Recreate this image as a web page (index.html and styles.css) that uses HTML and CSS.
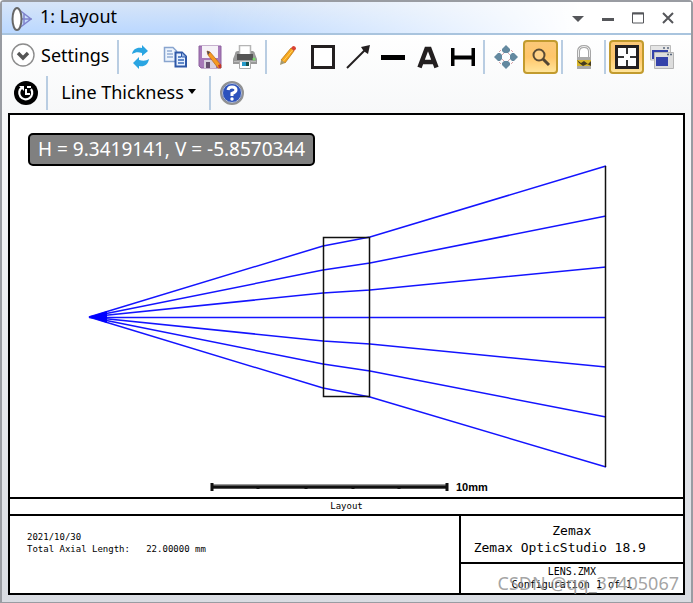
FILE: index.html
```html
<!DOCTYPE html>
<html lang="en">
<head>
<meta charset="utf-8">
<title>1: Layout</title>
<link rel="stylesheet" href="styles.css">
</head>
<body>
<main class="window">
  <header class="titlebar">
    <svg class="app-icon" width="24" height="26" viewBox="0 0 24 26" aria-hidden="true">
      <path d="M8 4L21 14L8 24M6 14H22M14 8V20" fill="none" stroke="#7f82cc" stroke-width="1.500"/>
      <ellipse cx="7" cy="14" rx="4.500" ry="11" fill="#fff" stroke="#666" stroke-width="2"/>
    </svg>
    <h1 class="title">1: Layout</h1>
    <button class="win-btn" aria-label="Menu"><svg width="14" height="14" viewBox="0 0 14 14"><path d="M1 5H13L7 11Z" fill="#55565a"/></svg></button>
    <button class="win-btn" aria-label="Minimize"><svg width="14" height="14" viewBox="0 0 14 14"><path d="M1 8.500H13" stroke="#55565a" stroke-width="3"/></svg></button>
    <button class="win-btn" aria-label="Maximize"><svg width="14" height="14" viewBox="0 0 14 14"><path d="M1.500 2H12.500V12H1.500Z" fill="none" stroke="#55565a"/><path d="M1 2.500H13" stroke="#55565a" stroke-width="2"/></svg></button>
    <button class="win-btn" aria-label="Close"><svg width="14" height="14" viewBox="0 0 14 14"><path d="M2 2L12 12M12 2L2 12" stroke="#55565a" stroke-width="2"/></svg></button>
  </header>

  <div class="toolbar" role="toolbar" aria-label="Layout tools">
    <div class="row">
      <button class="settings">
        <svg width="24" height="24" viewBox="0 0 24 24" aria-hidden="true"><circle cx="12" cy="12" r="11" fill="#fff" stroke="#8c8c8c" stroke-width="1.400"/><path d="M7 10L12 15L17 10" fill="none" stroke="#555" stroke-width="3.400"/></svg>
        Settings
      </button>
      <span class="sep"></span>
      <button class="tool" aria-label="Refresh"><svg width="24" height="24" viewBox="0 0 24 24"><path d="M4 9C5 4 9 2 14 3V0L20 6L14 11V8C10 7 8 7 4 9Z" fill="#2aa5e2"/><path d="M21 14C20 20 16 22 11 21V24L5 18L11 12V15C15 16 18 16 21 14Z" fill="#2aa5e2"/></svg></button>
      <button class="tool" aria-label="Copy"><svg width="24" height="24" viewBox="0 0 24 24"><path d="M1.500 2.500H10L13.500 6V16.500H1.500Z" fill="#edf4fd" stroke="#89a5cf" stroke-width="1.500"/><path d="M4 6H9M4 9H10M4 12H10" stroke="#6689bf"/><path d="M12.500 7.500H19L23 11.500V21.500H12.500Z" fill="#e6f0ff" stroke="#2e58a8" stroke-width="2"/><path d="M18.500 7.500V12H23" fill="#9dbbe8" stroke="#2e58a8"/><path d="M15 12H18M15 15H21M15 18H21" stroke="#3768b8" stroke-width="1.500"/></svg></button>
      <button class="tool" aria-label="Save"><svg width="24" height="24" viewBox="0 0 24 24"><path d="M1 1H23V23H3L1 21Z" fill="#a779b9" stroke="#8e629f"/><path d="M4 1H20V13H4Z" fill="#f5f2f7"/><path d="M6 15H18V23H6Z" fill="#d9d1df"/><path d="M8 17H12V23H8Z" fill="#665070"/><path d="M9 6L12 7L23 20V23H20L10 10Z" fill="#f59a22" stroke="#b3671c" stroke-width=".7"/><path d="M9 6L12 7L10 10Z" fill="#4b4652"/><path d="M20 20L23 19V23H21Z" fill="#c7322c"/></svg></button>
      <button class="tool" aria-label="Print"><svg width="24" height="24" viewBox="0 0 24 24"><path d="M6.500 9V.500H17.500V9" fill="#fff" stroke="#b5b5b5" stroke-width="1.500"/><path d="M2 9Q2 6 5 6H6V9H18V6H20Q22 7 22 9L24 14V19H0V14Z" fill="#999"/><path d="M4 9H20V15H4Z" fill="#555"/><path d="M1 16.500H23" stroke="#bbb"/><circle cx="21" cy="14" r="1.500" fill="#78db6b"/><path d="M6.500 16H17.500V23.500H6.500Z" fill="#fff" stroke="#aaa"/><path d="M9 17H13V21H9Z" fill="#269ac9"/><path d="M13 17H16V21H13Z" fill="#19524e"/></svg></button>
      <span class="sep"></span>
      <button class="tool" aria-label="Draw"><svg width="24" height="24" viewBox="0 0 24 24"><path d="M15 3L18 6L9 18L5 15Z" fill="#f7a71c" stroke="#b9781b" stroke-width=".8"/><path d="M17 4.500L7 16.500" stroke="#ffcf62"/><path d="M15 3L17 1Q20 1 20 4L18 6Z" fill="#d94334"/><path d="M5 15L4 20L9 18Z" fill="#a49a72"/></svg></button>
      <button class="tool" aria-label="Rectangle"><svg width="24" height="24" viewBox="0 0 24 24"><path d="M1.500 1.500H22.500V22.500H1.500Z" fill="#fff" stroke="#231f20" stroke-width="3"/></svg></button>
      <button class="tool" aria-label="Arrow"><svg width="24" height="24" viewBox="0 0 24 24"><path d="M1 23L19 5" stroke="#231f20" stroke-width="2"/><path d="M24 0L22 9L19 7L17 5L15 2Z" fill="#231f20"/></svg></button>
      <button class="tool" aria-label="Line"><svg width="24" height="24" viewBox="0 0 24 24"><path d="M0 12.500H24" stroke="#000" stroke-width="5"/></svg></button>
      <button class="tool" aria-label="Text"><svg width="24" height="24" viewBox="0 0 24 24"><path d="M3.500 22.500L10.500 4H13.500L20.500 22.500M7 17H17" fill="none" stroke="#231f20" stroke-width="4.500"/></svg></button>
      <button class="tool" aria-label="Dimension"><svg width="24" height="24" viewBox="0 0 24 24"><path d="M1.500 3V21M22.500 3V21M1 12.500H23" stroke="#000" stroke-width="4"/></svg></button>
      <span class="sep"></span>
      <button class="tool" aria-label="Pan"><svg width="24" height="24" viewBox="0 0 24 24"><g fill="#6489a0"><path id="arm" d="M12 0L16 4V6L14 8H10L8 6V4Z"/><use href="#arm" transform="rotate(90 12 12)"/><use href="#arm" transform="rotate(180 12 12)"/><use href="#arm" transform="rotate(270 12 12)"/></g><path d="M5 7L7 5M17 5L19 7M5 17L7 19M19 17L17 19M8 10L10 8M14 8L16 10M8 14L10 16M14 16L16 14" stroke="#d8a5aa"/></svg></button>
      <button class="tool active" aria-label="Zoom" aria-pressed="true"><svg width="24" height="24" viewBox="0 0 24 24"><circle cx="10" cy="10" r="5.500" fill="#ffd289" stroke="#5a4b35" stroke-width="2"/><path d="M14 14L20 20" stroke="#514533" stroke-width="3"/></svg></button>
      <span class="sep"></span>
      <button class="tool" aria-label="Lock"><svg width="24" height="24" viewBox="0 0 24 24"><path d="M6.500 13V6Q7 1.500 12 1.500T17.500 6V13" fill="#fff" stroke="#a6a6a6" stroke-width="3"/><path d="M6.500 13V6Q7 1.500 12 1.500T17.500 6V13" fill="none" stroke="#eee"/><path d="M5 12H19V24H5Z" fill="#aaa"/><path d="M5 15H19V21H5Z" fill="#d9b72b"/><path d="M5 15L9 18L12 16L16 19L19 16V21L15 19L11 21L7 18Z" fill="#453c20"/></svg></button>
      <span class="sep"></span>
      <button class="tool active" aria-label="Fit window" aria-pressed="true"><svg width="24" height="24" viewBox="0 0 24 24"><path d="M1.500 1.500H22.500V22.500H1.500Z" fill="#fff" stroke="#231f20" stroke-width="3"/><path d="M12 3V9M12 15V21M3 12H9M15 12H21" stroke="#333" stroke-width="2"/></svg></button>
      <button class="tool" aria-label="Windows"><svg width="24" height="24" viewBox="0 0 24 24"><path d="M.500 .500H20.500V15H.500Z" fill="#e5e5e5" stroke="#bbb"/><path d="M2 5H18V14H2Z" fill="#3442aa"/><path d="M4.500 7.500H23.500V23.500H4.500Z" fill="#ddd" stroke="#b5b5b5"/><path d="M6 12H18V21H6Z" fill="#3442aa"/><path d="M13 3H15M17 3H19M17 9.500H19M20 9.500H22" stroke="#58677d" stroke-width="1.500"/></svg></button>
    </div>
    <div class="row">
      <button class="tool" aria-label="Reset"><svg width="24" height="24" viewBox="0 0 24 24"><circle cx="12" cy="12" r="12" fill="#000"/><path d="M8 6.500A6.500 6.500 0 1 0 17 8" fill="none" stroke="#fff" stroke-width="2.200"/><path d="M5 5H10V10Z" fill="#fff"/><path d="M12 8V13H16" fill="none" stroke="#fff" stroke-width="2"/><path d="M13 6H17" stroke="#fff" stroke-width="2"/></svg></button>
      <span class="sep"></span>
      <button class="thickness">Line Thickness <svg width="8" height="5" viewBox="0 0 8 5" aria-hidden="true"><path d="M0 0H8L4 5Z"/></svg></button>
      <span class="sep"></span>
      <button class="tool" aria-label="Help"><svg width="24" height="24" viewBox="0 0 24 24"><circle cx="12" cy="12" r="11" fill="#2c52bd" stroke="#929292" stroke-width="2"/><circle cx="12" cy="12" r="9.500" fill="none" stroke="#b9c0d0"/><path d="M8 9Q8.500 6 12 6Q16 6 16 9Q16 11 12 12.500V15" fill="none" stroke="#fff" stroke-width="3"/><circle cx="12" cy="18" r="1.700" fill="#fff"/></svg></button>
    </div>
  </div>

  <section class="sheet">
    <div class="plot">
      <svg class="drawing" viewBox="10 115 673 382" role="img" aria-label="Ray layout">
        <g class="rays">
          <path d="M89 317L323 246L370 237L606 166"/>
          <path d="M89 317L323 270L370 263L606 216"/>
          <path d="M89 317L323 293L370 290L606 267"/>
          <path d="M89 317.500H606"/>
          <path d="M89 317L323 341L370 344L606 367"/>
          <path d="M89 317L323 364L370 371L606 417"/>
          <path d="M89 317L323 388L370 397L606 467"/>
          <path class="source" d="M89 317L107 311V323Z"/>
        </g>
        <path class="lens" d="M323.500 237.500H369.500V396.500H323.500ZM605.500 166V467"/>
        <path class="scale-halo" d="M212 486.500H447"/>
        <path class="scale" d="M212 487H447"/>
        <path class="ticks" d="M212 483V491M447 483V491M258 486V489M306 486V489M353 486V489M399 486V489"/>
        <text class="scale-label" x="456" y="491">10mm</text>
      </svg>
      <output class="readout">H = 9.3419141, V = -5.8570344</output>
    </div>
    <h2 class="caption">Layout</h2>
    <div class="details">
      <div class="notes">2021/10/30
Total Axial Length:   22.00000 mm</div>
      <div class="side">
        <div class="product"><span>Zemax</span><span class="version">Zemax OpticStudio 18.9</span></div>
        <div class="file">LENS.ZMX<br>Configuration 1 of 1</div>
      </div>
    </div>
  </section>
  <div class="watermark">CSDN @qq_37405067</div>
</main>
</body>
</html>
```
FILE: styles.css
```css
* { box-sizing: border-box; }

body {
  margin: 0;
  font-family: "Noto Sans", sans-serif;
  font-size: 18px;
  color: #000;
}

.window {
  position: relative;
  display: flex;
  flex-direction: column;
  min-height: 100vh;
  padding-bottom: 7px;
  border: 2px solid #999ca2;
  border-radius: 4px 4px 0 0;
  background: linear-gradient(#fff 30px, #f7f8f9 110px, #d9dce2 100%);
}

.titlebar {
  display: flex;
  align-items: center;
  height: 33px;
  padding: 0 8px;
  border-bottom: 2px solid #a9c4de;
  background:
    linear-gradient(90deg, transparent 30%, #fff 84%),
    linear-gradient(#d7e5f8, #bbd8ff);
}

.app-icon { margin-right: 6px; }

.title {
  flex: 1;
  margin: 0 0 4px;
  font-size: 18px;
  font-weight: 400;
  line-height: 24px;
}

button {
  padding: 0;
  border: 0;
  background: none;
  color: inherit;
  font: inherit;
}

.win-btn {
  display: grid;
  place-items: center;
  width: 30px;
  height: 30px;
}

.toolbar {
  display: grid;
  gap: 1px;
  padding: 4px 6px 3px;
}

.row {
  display: flex;
  align-items: center;
  height: 35px;
}

.tool {
  display: grid;
  place-items: center;
  flex: none;
  width: 35px;
  height: 34px;
}

.active {
  border: 2px solid #c29b2e;
  border-radius: 4px;
  background: linear-gradient(#fbc878, #ffc66a 50%, #ffe49a);
}

.sep {
  flex: none;
  width: 2px;
  height: 34px;
  margin: 0 3px;
  background: #b9cde2;
}

.settings {
  display: flex;
  align-items: center;
  gap: 6px;
  width: 106px;
  padding: 0 0 3px 3px;
  white-space: nowrap;
}

.thickness {
  display: flex;
  align-items: center;
  justify-content: center;
  gap: 4px;
  width: 155px;
  padding-bottom: 2px;
  white-space: nowrap;
}

.sheet {
  display: flex;
  flex: 1;
  flex-direction: column;
  margin: 0 6px;
  border: 2px solid #000;
  background: #fff;
  font-family: "DejaVu Sans Mono", monospace;
}

.plot { position: relative; flex: 1; }
.drawing { display: block; width: 100%; }
.rays { fill: none; stroke: #1414ff; stroke-width: 1.5; }
.source { fill: #00f; stroke: none; }
.lens { fill: none; stroke: #111; stroke-width: 1.5; }
.scale-halo { stroke: #999; stroke-width: 5; }
.scale { stroke: #111; stroke-width: 3; }
.ticks { stroke: #111; stroke-width: 3; }
.scale-label { font: 700 11px "Liberation Sans", sans-serif; }

.readout {
  position: absolute;
  top: 18px;
  left: 18px;
  padding: 0 8px;
  border: 2px solid #000;
  border-radius: 5px;
  background: #808080;
  color: #fff;
  font: 19px/29px "Noto Sans", sans-serif;
  white-space: nowrap;
}

.caption {
  margin: 0;
  border: solid #000;
  border-width: 2px 0;
  font-size: 9px;
  font-weight: 400;
  line-height: 15px;
  text-align: center;
}

.details { display: grid; grid-template-columns: 2fr 1fr; }

.notes {
  padding: 15px 17px;
  font-size: 9px;
  line-height: 12px;
  white-space: pre-wrap;
}

.side { border-left: 2px solid #000; text-align: center; }

.product {
  display: grid;
  padding: 6px 0;
  font-size: 13px;
  line-height: 17px;
}

.version { padding-right: 24px; }

.file {
  padding: 1px 0 2px;
  border-top: 2px solid #000;
  font-size: 10px;
  line-height: 13px;
}

.watermark {
  position: absolute;
  right: 12px;
  bottom: 7px;
  color: #8c8c8ccc;
  font-size: 18px;
  line-height: 24px;
}
```
